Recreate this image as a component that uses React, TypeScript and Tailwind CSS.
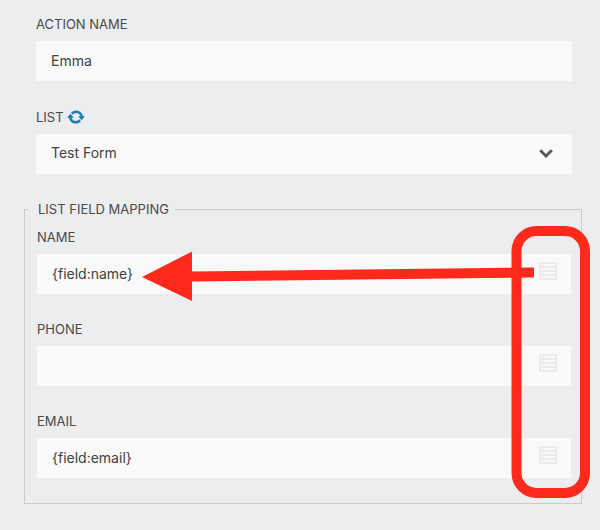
import { useState } from 'react';

type Field = { id: string; label: string; value: string };

const initialFields: Field[] = [
  { id: 'name', label: 'NAME', value: '{field:name}' },
  { id: 'phone', label: 'PHONE', value: '' },
  { id: 'email', label: 'EMAIL', value: '{field:email}' },
];

const labelClass = 'text-[13px] leading-4 text-[#4a4a4a]';
const inputClass = 'block h-10 w-full bg-[#f9f9f9] px-[15px] pb-[2px] text-sm text-[#424242] outline-none';

function RefreshIcon() {
  return (
    <svg viewBox="0.8 3 18.4 14" className="h-[14px] w-[18px]" aria-hidden="true">
      <path
        d="M10.2 3.28c3.53 0 6.43 2.61 6.92 6h2.08l-3.5 4-3.5-4h2.32c-.45-1.97-2.21-3.45-4.32-3.45-1.45 0-2.73.71-3.54 1.78L4.95 5.66C6.23 4.2 8.11 3.28 10.2 3.28zm-.4 13.44c-3.52 0-6.43-2.61-6.92-6H.8l3.5-4 3.5 4H5.48c.45 1.97 2.21 3.45 4.32 3.45 1.45 0 2.73-.71 3.54-1.78l1.71 1.95c-1.28 1.46-3.15 2.38-5.25 2.38z"
        fill="#1a7fb5"
      />
    </svg>
  );
}

function MergeTagIcon() {
  return (
    <svg viewBox="0 0 18 18" className="h-[18px] w-[18px]" aria-hidden="true">
      <rect width="18" height="18" rx="1" fill="#ebebeb" />
      <g fill="#f9f9f9">
        {[2, 6, 10, 14].map((y) => (
          <g key={y}>
            <rect x="2" y={y} width="2" height="2" />
            <rect x="5" y={y} width="11" height="2" />
          </g>
        ))}
      </g>
    </svg>
  );
}

// Red box around the merge tag buttons, with an arrow to the name value
function Callout() {
  return (
    <svg viewBox="0 0 600 530" className="pointer-events-none absolute top-0 right-0 h-[530px] w-[600px]" aria-hidden="true">
      <rect x="516.5" y="231" width="68.5" height="262" rx="20" fill="none" stroke="#ff2a1c" strokeWidth="10" />
      <path d="M142 277L192 251.5V271.5L534 267.5V277.5L192 281.5V301z" fill="#ff2a1c" />
    </svg>
  );
}

export default function App() {
  const [actionName, setActionName] = useState('Emma');
  const [fields, setFields] = useState(initialFields);

  const updateField = (id: string, value: string) => {
    setFields(fields.map((field) => (field.id === id ? { ...field, value } : field)));
  };

  return (
    <main className="relative min-h-screen bg-[#ebedee] pt-4 pr-[18px] pb-6 pl-6 font-['Inter','Liberation_Sans',sans-serif]">
      <div className="flex flex-col gap-7 pr-[10px] pl-3">
        <div className="flex flex-col gap-[9px]">
          <label htmlFor="action-name" className={labelClass}>ACTION NAME</label>
          <input id="action-name" value={actionName} onChange={(event) => setActionName(event.target.value)} className={inputClass} />
        </div>
        <div className="flex flex-col gap-[9px]">
          <div className="flex h-4 items-center gap-[3px]">
            <label htmlFor="list" className={labelClass}>LIST</label>
            <button type="button" aria-label="Refresh lists">
              <RefreshIcon />
            </button>
          </div>
          <div className="relative">
            <select id="list" className={`${inputClass} appearance-none`}>
              <option>Test Form</option>
            </select>
            <svg viewBox="0 0 14 9" className="pointer-events-none absolute top-[15px] right-[19px] h-[9px] w-[14px]" aria-hidden="true">
              <path d="M1.2 1.2L7 7L12.8 1.2" fill="none" stroke="#555" strokeWidth="2.8" />
            </svg>
          </div>
        </div>
      </div>

      <fieldset className="mt-[27px] border border-[#c9cbcd] pr-[10px] pb-[25px] pl-3">
        <legend className={`${labelClass} -ml-[9px] pr-[6px] pl-[10px]`}>LIST FIELD MAPPING</legend>
        <div className="flex flex-col gap-[27px] pt-3">
          {fields.map((field) => (
            <div key={field.id} className="flex flex-col gap-[9px]">
              <label htmlFor={field.id} className={labelClass}>{field.label}</label>
              <div className="relative">
                <input id={field.id} value={field.value} onChange={(event) => updateField(field.id, event.target.value)} className={inputClass} />
                <button type="button" aria-label={`Insert merge tag for ${field.label}`} className="absolute top-2 right-[14px]">
                  <MergeTagIcon />
                </button>
              </div>
            </div>
          ))}
        </div>
      </fieldset>
      <Callout />
    </main>
  );
}
